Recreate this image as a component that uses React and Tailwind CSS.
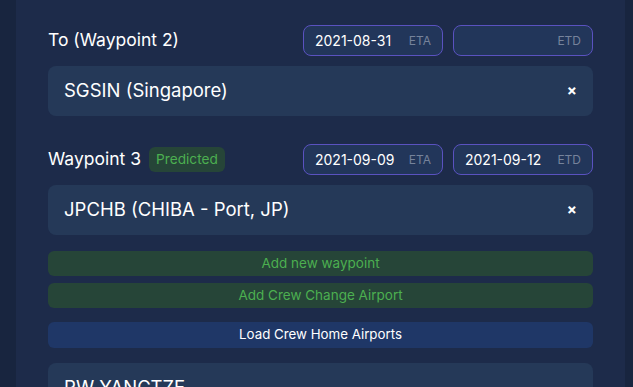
import React from "react";

const font = { fontFamily: "Inter, 'Noto Sans', sans-serif" };

function DateField({ value, label }) {
  return (
    <div className="flex h-[31px] w-[140px] items-center justify-between rounded-lg border border-[#5a52c0] bg-[#22365a] px-[11px]">
      <span className="text-[14px] text-white">{value}</span>
      <span className="text-[12px] text-[#76839b]">{label}</span>
    </div>
  );
}

function PortCard({ name }) {
  return (
    <div className="flex h-[50px] shrink-0 items-center justify-between rounded-lg bg-[#253958] pl-4 pr-[16px]">
      <span className="text-[18.5px] text-white">{name}</span>
      <span className="text-[15px] font-bold text-white">×</span>
    </div>
  );
}

function Waypoint({ title, badge, eta, etd, port }) {
  return (
    <div className="flex shrink-0 flex-col gap-[10px]">
      <div className="flex h-[31px] items-center justify-between">
        <div className="flex items-center gap-[8px]">
          <span className="text-[17.5px] text-white">{title}</span>
          {badge && (
            <span className="rounded-md bg-[#264538] px-[7px] py-[2px] text-[13.7px] text-[#4caf50]">
              {badge}
            </span>
          )}
        </div>
        <div className="flex gap-[10px]">
          <DateField value={eta} label="ETA" />
          <DateField value={etd} label="ETD" />
        </div>
      </div>
      <PortCard name={port} />
    </div>
  );
}

export default function App() {
  return (
    <div className="flex h-[387px] w-[633px] items-start overflow-hidden bg-[#18253f]" style={font}>
      <div className="ml-[16px] mr-[8px] flex min-h-[387px] flex-1 flex-col bg-[#1d2b4a] px-[32px] pt-[25px]">
        <Waypoint title="To (Waypoint 2)" eta="2021-08-31" etd="" port="SGSIN (Singapore)" />
        <div className="h-[28px] shrink-0" />
        <Waypoint
          title="Waypoint 3"
          badge="Predicted"
          eta="2021-09-09"
          etd="2021-09-12"
          port="JPCHB (CHIBA - Port, JP)"
        />
        <div className="mt-[16px] flex shrink-0 flex-col gap-[7px]">
          <button className="h-[25px] rounded-md bg-[#264538] text-[13.5px] text-[#4caf50]">
            Add new waypoint
          </button>
          <button className="h-[25px] rounded-md bg-[#264538] text-[13.5px] text-[#4caf50]">
            Add Crew Change Airport
          </button>
        </div>
        <button className="mt-[14px] h-[26px] shrink-0 rounded-md bg-[#1f3767] text-[13.3px] text-white">
          Load Crew Home Airports
        </button>
        <div className="mt-[15px] h-[60px] shrink-0 rounded-lg bg-[#253958] px-4 pt-[11px]">
          <span className="text-[18.5px] text-white">RW YANGTZE</span>
        </div>
      </div>
    </div>
  );
}
